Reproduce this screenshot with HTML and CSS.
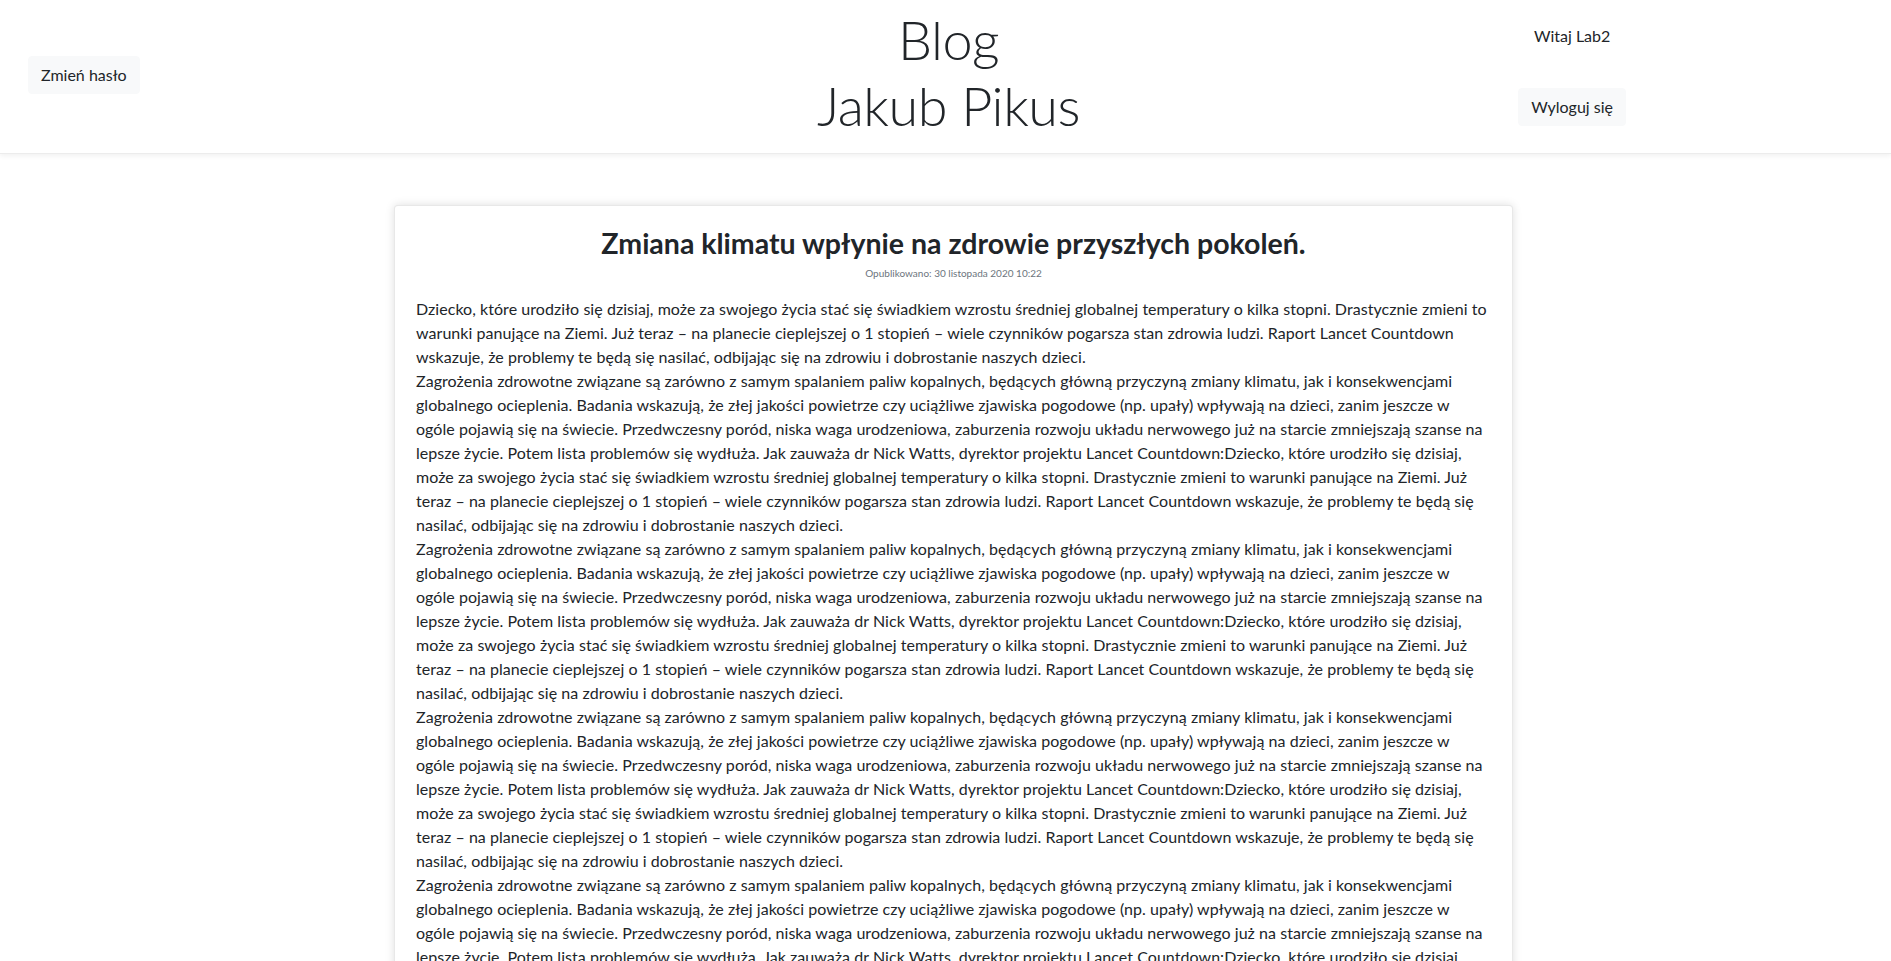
FILE: index.html
```html
<!DOCTYPE html>
<html lang="pl">
<head>
<meta charset="utf-8">
<title>Blog Jakub Pikus</title>
<link rel="stylesheet" href="styles.css">
</head>
<body>
<header class="site-header">
  <div class="header-left">
    <button class="btn-light" type="button">Zmień hasło</button>
  </div>
  <div class="header-title">
    <div class="title-line">Blog</div>
    <div class="title-line">Jakub Pikus</div>
  </div>
  <div class="header-right">
    <div class="user-box">
      <span class="welcome">Witaj Lab2</span>
      <button class="btn-light" type="button">Wyloguj się</button>
    </div>
  </div>
</header>

<main class="content">
  <article class="post-card">
    <h3 class="post-title">Zmiana klimatu wpłynie na zdrowie przyszłych pokoleń.</h3>
    <div class="post-meta">Opublikowano: 30 listopada 2020 10:22</div>
    <div class="post-body">
      <p>Dziecko, które urodziło się dzisiaj, może za swojego życia stać się świadkiem wzrostu średniej globalnej temperatury o kilka stopni. Drastycznie zmieni to warunki panujące na Ziemi. Już teraz – na planecie cieplejszej o 1 stopień – wiele czynników pogarsza stan zdrowia ludzi. Raport Lancet Countdown wskazuje, że problemy te będą się nasilać, odbijając się na zdrowiu i dobrostanie naszych dzieci.</p>
      <p>Zagrożenia zdrowotne związane są zarówno z samym spalaniem paliw kopalnych, będących główną przyczyną zmiany klimatu, jak i konsekwencjami globalnego ocieplenia. Badania wskazują, że złej jakości powietrze czy uciążliwe zjawiska pogodowe (np. upały) wpływają na dzieci, zanim jeszcze w ogóle pojawią się na świecie. Przedwczesny poród, niska waga urodzeniowa, zaburzenia rozwoju układu nerwowego już na starcie zmniejszają szanse na lepsze życie. Potem lista problemów się wydłuża. Jak zauważa dr Nick Watts, dyrektor projektu Lancet Countdown:Dziecko, które urodziło się dzisiaj, może za swojego życia stać się świadkiem wzrostu średniej globalnej temperatury o kilka stopni. Drastycznie zmieni to warunki panujące na Ziemi. Już teraz – na planecie cieplejszej o 1 stopień – wiele czynników pogarsza stan zdrowia ludzi. Raport Lancet Countdown wskazuje, że problemy te będą się nasilać, odbijając się na zdrowiu i dobrostanie naszych dzieci.</p>
      <p>Zagrożenia zdrowotne związane są zarówno z samym spalaniem paliw kopalnych, będących główną przyczyną zmiany klimatu, jak i konsekwencjami globalnego ocieplenia. Badania wskazują, że złej jakości powietrze czy uciążliwe zjawiska pogodowe (np. upały) wpływają na dzieci, zanim jeszcze w ogóle pojawią się na świecie. Przedwczesny poród, niska waga urodzeniowa, zaburzenia rozwoju układu nerwowego już na starcie zmniejszają szanse na lepsze życie. Potem lista problemów się wydłuża. Jak zauważa dr Nick Watts, dyrektor projektu Lancet Countdown:Dziecko, które urodziło się dzisiaj, może za swojego życia stać się świadkiem wzrostu średniej globalnej temperatury o kilka stopni. Drastycznie zmieni to warunki panujące na Ziemi. Już teraz – na planecie cieplejszej o 1 stopień – wiele czynników pogarsza stan zdrowia ludzi. Raport Lancet Countdown wskazuje, że problemy te będą się nasilać, odbijając się na zdrowiu i dobrostanie naszych dzieci.</p>
      <p>Zagrożenia zdrowotne związane są zarówno z samym spalaniem paliw kopalnych, będących główną przyczyną zmiany klimatu, jak i konsekwencjami globalnego ocieplenia. Badania wskazują, że złej jakości powietrze czy uciążliwe zjawiska pogodowe (np. upały) wpływają na dzieci, zanim jeszcze w ogóle pojawią się na świecie. Przedwczesny poród, niska waga urodzeniowa, zaburzenia rozwoju układu nerwowego już na starcie zmniejszają szanse na lepsze życie. Potem lista problemów się wydłuża. Jak zauważa dr Nick Watts, dyrektor projektu Lancet Countdown:Dziecko, które urodziło się dzisiaj, może za swojego życia stać się świadkiem wzrostu średniej globalnej temperatury o kilka stopni. Drastycznie zmieni to warunki panujące na Ziemi. Już teraz – na planecie cieplejszej o 1 stopień – wiele czynników pogarsza stan zdrowia ludzi. Raport Lancet Countdown wskazuje, że problemy te będą się nasilać, odbijając się na zdrowiu i dobrostanie naszych dzieci.</p>
      <p>Zagrożenia zdrowotne związane są zarówno z samym spalaniem paliw kopalnych, będących główną przyczyną zmiany klimatu, jak i konsekwencjami globalnego ocieplenia. Badania wskazują, że złej jakości powietrze czy uciążliwe zjawiska pogodowe (np. upały) wpływają na dzieci, zanim jeszcze w ogóle pojawią się na świecie. Przedwczesny poród, niska waga urodzeniowa, zaburzenia rozwoju układu nerwowego już na starcie zmniejszają szanse na lepsze życie. Potem lista problemów się wydłuża. Jak zauważa dr Nick Watts, dyrektor projektu Lancet Countdown:Dziecko, które urodziło się dzisiaj, może za swojego życia stać się świadkiem wzrostu średniej globalnej temperatury o kilka stopni. Drastycznie zmieni to warunki panujące na Ziemi. Już teraz – na planecie cieplejszej o 1 stopień – wiele czynników pogarsza stan zdrowia ludzi. Raport Lancet Countdown wskazuje, że problemy te będą się nasilać, odbijając się na zdrowiu i dobrostanie naszych dzieci.</p>
      <p>Zagrożenia zdrowotne związane są zarówno z samym spalaniem paliw kopalnych, będących główną przyczyną zmiany klimatu, jak i konsekwencjami globalnego ocieplenia. Badania wskazują, że złej jakości powietrze czy uciążliwe zjawiska pogodowe (np. upały) wpływają na dzieci, zanim jeszcze w ogóle pojawią się na świecie. Przedwczesny poród, niska waga urodzeniowa, zaburzenia rozwoju układu nerwowego już na starcie zmniejszają szanse na lepsze życie. Potem lista problemów się wydłuża. Jak zauważa dr Nick Watts, dyrektor projektu Lancet Countdown:Dziecko, które urodziło się dzisiaj, może za swojego życia stać się świadkiem wzrostu średniej globalnej temperatury o kilka stopni. Drastycznie zmieni to warunki panujące na Ziemi. Już teraz – na planecie cieplejszej o 1 stopień – wiele czynników pogarsza stan zdrowia ludzi. Raport Lancet Countdown wskazuje, że problemy te będą się nasilać, odbijając się na zdrowiu i dobrostanie naszych dzieci.</p>
    </div>
  </article>
</main>
</body>
</html>
```
FILE: styles.css
```css
* { box-sizing: border-box; }

html, body {
  margin: 0;
  padding: 0;
  background: #ffffff;
}

body {
  font-family: "Lato", "Liberation Sans", sans-serif;
  font-size: 16px;
  line-height: 1.5;
  color: #212529;
}

/* ---------- header ---------- */
.site-header {
  display: grid;
  grid-template-columns: 1fr auto 1fr;
  align-items: center;
  height: 154px;
  padding-bottom: 4px;
  border-bottom: 1px solid #ececec;
  box-shadow: 0 2px 5px rgba(0, 0, 0, 0.06);
}

.header-left {
  padding-left: 28px;
}

.header-title {
  align-self: start;
  padding-top: 7px;
  text-align: center;
  font-size: 54px;
  font-weight: 300;
  line-height: 66px;
  letter-spacing: -0.5px;
  color: #212529;
  transform: translateX(3px);
}

.header-right {
  align-self: start;
  display: flex;
  justify-content: flex-end;
  padding-right: 265px;
  padding-top: 24px;
}

.user-box {
  display: flex;
  flex-direction: column;
  align-items: center;
  gap: 40px;
}

.welcome {
  display: block;
  line-height: 24px;
  color: #212529;
}

.btn-light {
  font-family: inherit;
  font-size: 16px;
  line-height: 24px;
  color: #212529;
  background: #f8f9fa;
  border: 1px solid #f8f9fa;
  border-radius: 4px;
  padding: 6px 12px;
  cursor: pointer;
}

/* ---------- content ---------- */
.content {
  padding: 51px 0 40px 16px;
}

.post-card {
  width: 1119px;
  margin: 0 auto;
  padding: 20px 21px 24px;
  background: #fff;
  border: 1px solid rgba(0, 0, 0, 0.09);
  border-radius: 4px;
  box-shadow: 0 0 10px rgba(0, 0, 0, 0.13);
}

.post-title {
  margin: 0 0 6px;
  text-align: center;
  font-size: 28.5px;
  font-weight: 700;
  line-height: 1.2;
  color: #212529;
}

.post-meta {
  text-align: center;
  font-size: 10px;
  line-height: 15px;
  color: #6c757d;
  margin-bottom: 16px;
}

.post-body {
  letter-spacing: 0.05px;
}

.post-body p {
  margin: 0;
}
```
